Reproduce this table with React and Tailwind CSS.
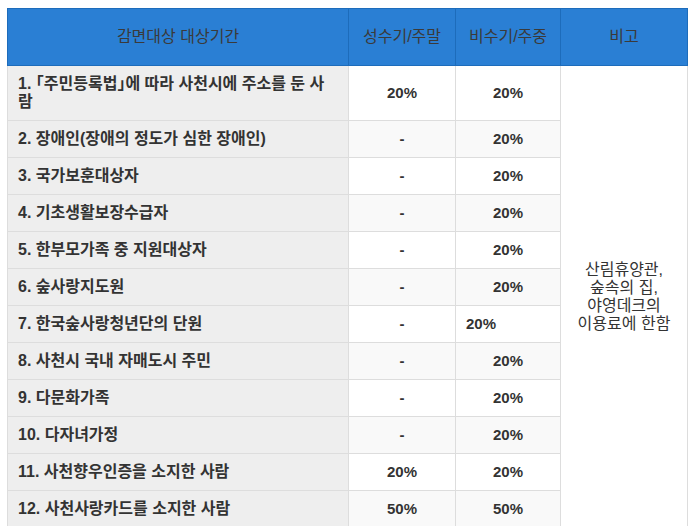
export default function App() {
  const rows = [
    ["1. 「주민등록법」에 따라 사천시에 주소를 둔 사람", "20%", "20%"],
    ["2. 장애인(장애의 정도가 심한 장애인)", "-", "20%"],
    ["3. 국가보훈대상자", "-", "20%"],
    ["4. 기초생활보장수급자", "-", "20%"],
    ["5. 한부모가족 중 지원대상자", "-", "20%"],
    ["6. 숲사랑지도원", "-", "20%"],
    ["7. 한국숲사랑청년단의 단원", "-", "20%"],
    ["8. 사천시 국내 자매도시 주민", "-", "20%"],
    ["9. 다문화가족", "-", "20%"],
    ["10. 다자녀가정", "-", "20%"],
    ["11. 사천향우인증을 소지한 사람", "20%", "20%"],
    ["12. 사천사랑카드를 소지한 사람", "50%", "50%"],
  ];
  return (
    <div className="bg-white w-[693px] h-[526px] overflow-hidden pt-[8px] pl-[7px]" style={{ fontFamily: '"Liberation Sans", "Noto Sans CJK KR", sans-serif' }}>
      <table className="w-[680px] border-collapse table-fixed text-[15px] leading-[18px] text-[#333]">
        <colgroup>
          <col className="w-[341px]" />
          <col className="w-[107px]" />
          <col className="w-[105px]" />
          <col className="w-[127px]" />
        </colgroup>
        <thead>
          <tr className="bg-[#2a7fd4] h-[57px]">
            <th className="border border-[#1d6cbb] font-normal text-[16px] text-[#3a3a3a] text-center align-middle">감면대상 대상기간</th>
            <th className="border border-[#1d6cbb] font-normal text-[16px] text-[#3a3a3a] text-center align-middle">성수기/주말</th>
            <th className="border border-[#1d6cbb] font-normal text-[16px] text-[#3a3a3a] text-center align-middle">비수기/주중</th>
            <th className="border border-[#1d6cbb] font-normal text-[16px] text-[#3a3a3a] text-center align-middle">비고</th>
          </tr>
        </thead>
        <tbody>
          {rows.map((r, i) => {
            const stripe = i % 2 === 1 ? "bg-[#f9f9f9]" : "bg-white";
            return (
              <tr key={i}>
                <td className="border border-[#dddddd] bg-[#eeeeee] font-bold text-[16px] pl-[10px] pr-[12px] py-[9px] align-middle [font-feature-settings:'halt']">{r[0]}</td>
                <td className={`border border-[#dddddd] ${stripe} font-bold text-center py-[9px] align-middle`}>{r[1]}</td>
                {i === 6 ? (
                  <td className={`border border-[#dddddd] ${stripe} font-bold text-left pl-[10px] py-[9px] align-middle`}>{r[2]}</td>
                ) : (
                  <td className={`border border-[#dddddd] ${stripe} font-bold text-center py-[9px] align-middle`}>{r[2]}</td>
                )}
                {i === 0 && (
                  <td rowSpan={12} className="border border-[#dddddd] bg-white text-center text-[16px] align-middle px-[8px]">
                    산림휴양관,<br />숲속의 집,<br />야영데크의<br />이용료에 한함
                  </td>
                )}
              </tr>
            );
          })}
        </tbody>
      </table>
    </div>
  );
}
